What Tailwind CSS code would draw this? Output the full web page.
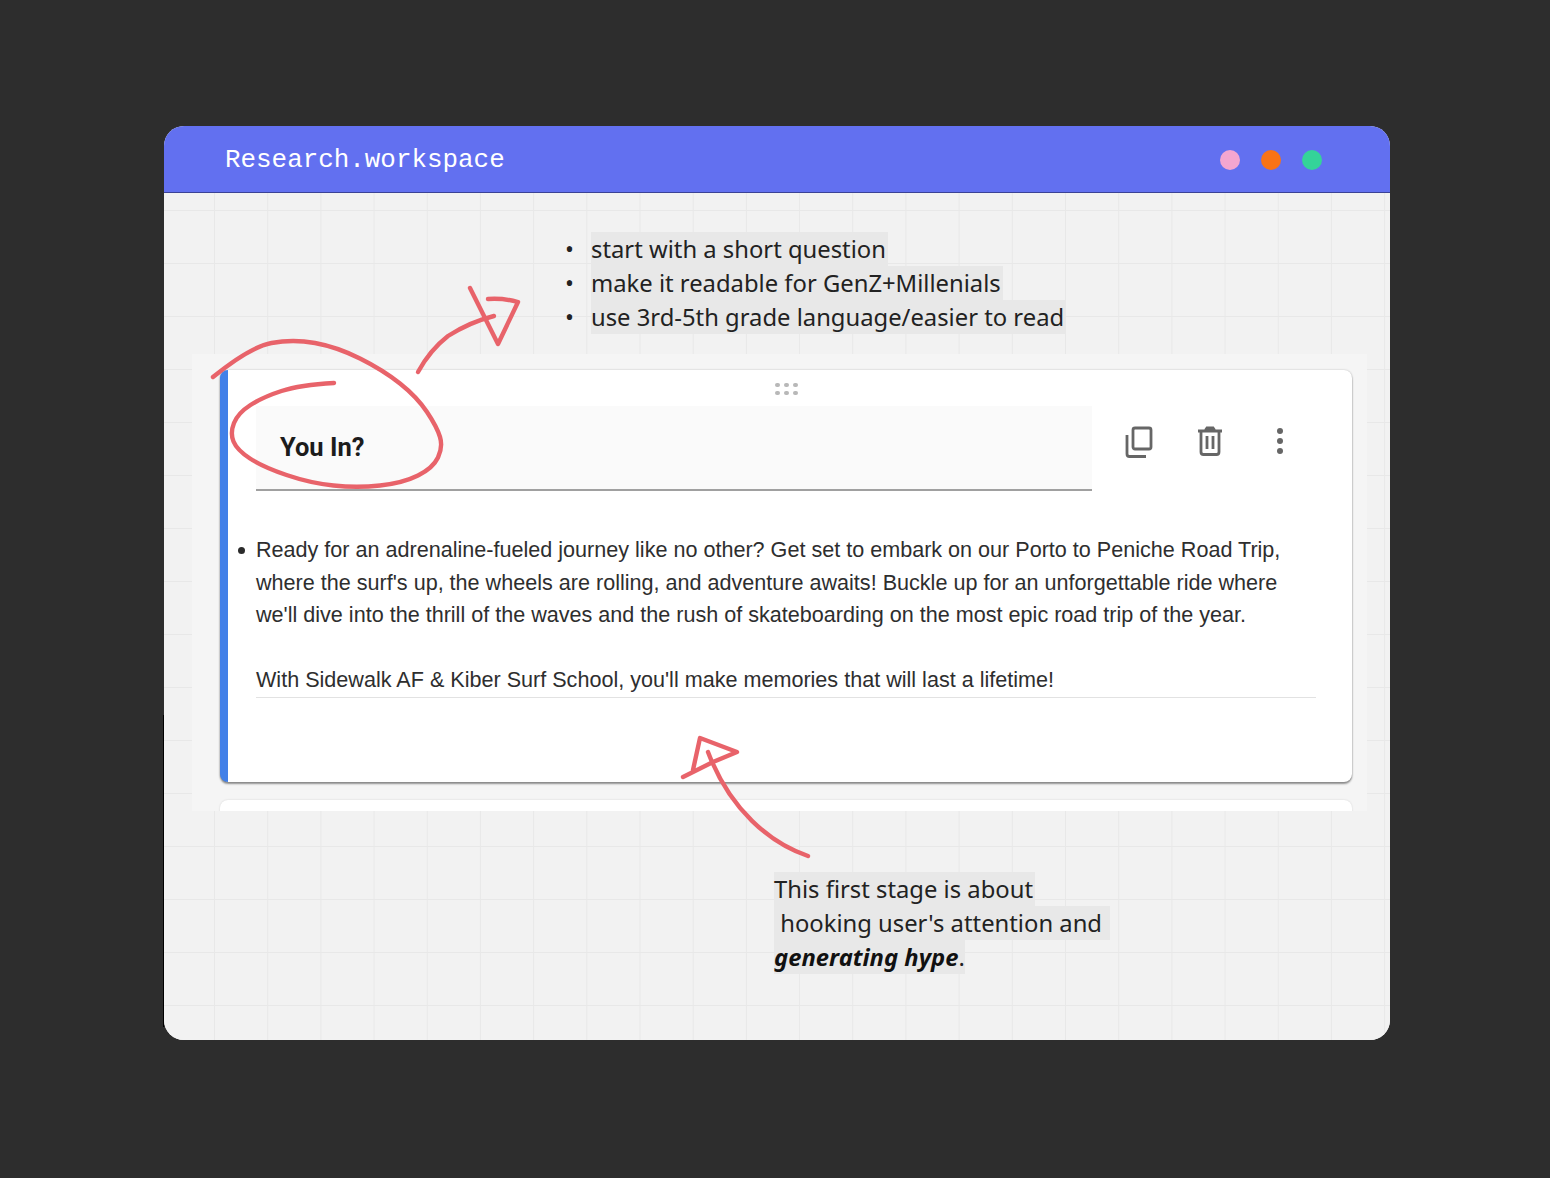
<!DOCTYPE html>
<html lang="en">
<head>
<meta charset="utf-8">
<title>Research.workspace</title>
<script src="https://cdn.jsdelivr.net/npm/@tailwindcss/browser@4"></script>
</head>
<body class="bg-[#2d2d2d] m-0">
<div class="relative w-[1550px] h-[1178px] pt-[126px] pl-[164px] overflow-hidden">
  <span class="absolute left-[163px] top-[715px] w-[1px] h-[312px] bg-black"></span>
  <div class="relative w-[1226px] h-[914px] rounded-[20px] overflow-hidden flex flex-col bg-[#f2f2f2]">
    <header class="h-[67px] shrink-0 bg-[#6270f0] border-b border-[#3b4296] flex items-center justify-between pl-[61px] pr-[67px] pt-[2px]">
      <span class="font-['Liberation_Mono',monospace] text-[25.9px] text-white leading-none relative top-[1px]">Research.workspace</span>
      <div class="flex gap-[21px] relative left-[-1px]">
        <span class="w-[20px] h-[20px] rounded-full bg-[#f4a6d0]"></span>
        <span class="w-[20px] h-[20px] rounded-full bg-[#f97316]"></span>
        <span class="w-[20px] h-[20px] rounded-full bg-[#34d399]"></span>
      </div>
    </header>
    <main class="flex-1 flex flex-col pt-[39px] font-['Noto_Sans',sans-serif] text-[#222] bg-[#f2f2f2] bg-[linear-gradient(#e8e8e8_1px,transparent_1px),linear-gradient(90deg,#e8e8e8_1px,transparent_1px)] bg-[length:53.2px_53px] bg-[position:50px_17px]">
      <ul class="ml-[401px] text-[23.8px] leading-[34px] whitespace-nowrap">
        <li class="flex"><span class="w-[26px]">•</span><span class="bg-[#e8e8e8] pr-[2px]">start with a short question</span></li>
        <li class="flex"><span class="w-[26px]">•</span><span class="bg-[#e8e8e8] pr-[2px]">make it readable for GenZ+Millenials</span></li>
        <li class="flex"><span class="w-[26px]">•</span><span class="bg-[#e8e8e8] pr-[2px]">use 3rd-5th grade language/easier to read</span></li>
      </ul>
      <section class="mt-[20px] ml-[28px] w-[1175px] h-[457px] bg-[#f5f5f5] pt-[16px] pl-[28px] overflow-hidden font-['Liberation_Sans',sans-serif]">
        <div class="w-[1132px] h-[412px] bg-white rounded-[8px] border-l-[8px] border-[#4280e8] shadow-[0_0_2px_rgba(0,0,0,0.25),0_2px_2px_rgba(0,0,0,0.4)] pt-[13px]">
          <div class="grid grid-cols-3 gap-x-[4px] gap-y-[4px] w-[23px] mx-auto mb-[11px] relative left-[-4px]">
            <i class="w-[5px] h-[4px] bg-[#b8b8b8] rounded-full"></i><i class="w-[5px] h-[4px] bg-[#b8b8b8] rounded-full"></i><i class="w-[5px] h-[4px] bg-[#b8b8b8] rounded-full"></i>
            <i class="w-[5px] h-[4px] bg-[#b8b8b8] rounded-full"></i><i class="w-[5px] h-[4px] bg-[#b8b8b8] rounded-full"></i><i class="w-[5px] h-[4px] bg-[#b8b8b8] rounded-full"></i>
          </div>
          <div class="flex items-start ml-[28px]">
            <div class="w-[836px] h-[85px] bg-[#fafafa] border-b-2 border-[#a0a0a0] pl-[24px] pt-[26px] font-['Roboto',sans-serif] font-bold text-[25.5px] leading-[30px] text-[#1c1c1c]">You In?</div>
            <div class="flex ml-[33px] mt-[20px] items-start">
              <svg class="w-[28px] h-[32px]" viewBox="0 0 28 32" fill="none" stroke="#666" stroke-width="2.8"><rect x="8" y="2" width="18" height="21" rx="2"/><path d="M2 9v19c0 1.500 1 2.500 2.500 2.500H21"/></svg>
              <svg class="w-[26px] h-[30px] ml-[44px]" viewBox="0 0 26 30" fill="none" stroke="#666" stroke-width="2.800"><path d="M1 5h24M8.500 4l1.500-2h6l1.500 2"/><path d="M4 5v21c0 1.500 1 2.500 2.500 2.500h13c1.500 0 2.500-1 2.500-2.500V5M10 10v13M16 10v13"/></svg>
              <svg class="w-[8px] h-[28px] ml-[53px] mt-[1px]" viewBox="0 0 8 28" fill="#666"><circle cx="4" cy="4" r="3"/><circle cx="4" cy="14" r="3"/><circle cx="4" cy="24" r="3"/></svg>
            </div>
          </div>
          <div class="relative mt-[43px] ml-[28px] w-[1060px] h-[164px] border-b border-[#e2e2e2] text-[21.58px] leading-[32.5px] text-[#2e2e2e] whitespace-nowrap">
            <span class="absolute left-[-18px] top-[13px] w-[7px] h-[7px] rounded-full bg-[#2b2b2b]"></span>
            <p>Ready for an adrenaline-fueled journey like no other? Get set to embark on our Porto to Peniche Road Trip,</p>
            <p>where the surf's up, the wheels are rolling, and adventure awaits! Buckle up for an unforgettable ride where</p>
            <p>we'll dive into the thrill of the waves and the rush of skateboarding on the most epic road trip of the year.</p>
            <p class="mt-[32.5px]">With Sidewalk AF &amp; Kiber Surf School, you'll make memories that will last a lifetime!</p>
          </div>
        </div>
        <div class="mt-[18px] w-[1132px] h-[20px] bg-white rounded-[8px] shadow-[0_0_2px_rgba(0,0,0,0.15)]"></div>
      </section>
      <div class="mt-[61px] ml-[610px] text-[23.8px] leading-[34px] whitespace-nowrap flex flex-col items-start">
        <span class="bg-[#e8e8e8] pr-[2px]">This first stage is about</span>
        <span class="bg-[#e8e8e8] pr-[8px] whitespace-pre"> hooking user's attention and</span>
        <span class="bg-[#e8e8e8]"><b class="italic font-bold text-[#111]">generating hype</b>.</span>
      </div>
    </main>
    <svg class="absolute left-[-164px] top-[-126px] w-[1550px] h-[1178px] pointer-events-none" viewBox="0 0 1550 1178" fill="none" stroke="#e8636a" stroke-width="4.4" stroke-linecap="round" stroke-linejoin="round">
      <path d="M213 377Q250 347 271.500 343Q293 339 315 343Q337 347 360 358.500Q383 370 400 383.500Q417 397 427 412Q437 427 440 437Q443 447 438 457.500Q433 468 418 475.500Q403 483 380 485.500Q357 488 333.500 485.500Q310 483 286.500 475Q263 467 250 458.500Q237 450 233.500 441.500Q230 433 234 423Q238 413 250.500 405Q263 397 281.500 391Q300 385 334 383"/>
      <path d="M418 372Q430 350 448 336Q470 322 494 316"/>
      <path d="M470 288L498 344L518 302Q504 298 488 299"/>
      <path d="M808 856C770 843 730 810 708 752"/>
      <path d="M683 777L713 762L737 752L700 738L693 770"/>
    </svg>
  </div>
</div>
</body>
</html>
